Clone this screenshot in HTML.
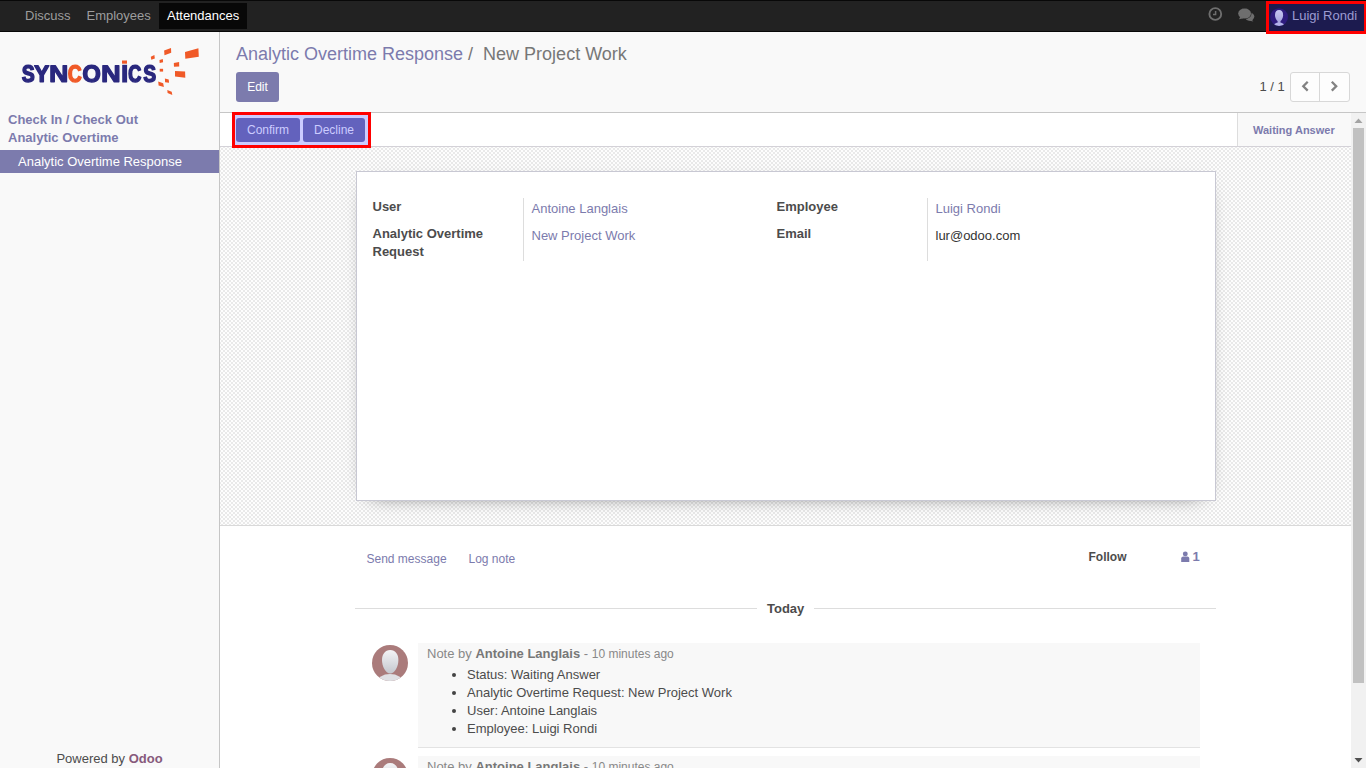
<!DOCTYPE html>
<html><head><meta charset="utf-8">
<style>
*{box-sizing:border-box;margin:0;padding:0}
html,body{width:1366px;height:768px;overflow:hidden;background:#fff;font-family:"Liberation Sans",sans-serif;font-size:13px;color:#4c4c4c}
.t{position:absolute;white-space:nowrap;line-height:20px}
#nav{position:absolute;left:0;top:0;width:1366px;height:32px;background:#222;border-top:1px solid #080808;border-bottom:1px solid #080808}
.nv{position:absolute;top:0;height:30px;line-height:30px;color:#9d9d9d;font-size:13px;white-space:nowrap}
#side{position:absolute;left:0;top:32px;width:220px;height:736px;background:#f9f9f9;border-right:1px solid #c6c6c6}
#cp{position:absolute;left:220px;top:32px;width:1146px;height:81px;background:#f9f9f9;border-bottom:1px solid #c6c6c6}
#content{position:absolute;left:220px;top:113px;width:1131px;height:655px;background:#fff;overflow:hidden}
#sbar{position:absolute;left:1351px;top:113px;width:15px;height:655px;background:#f1f1f1}
.b{font-weight:bold}
.p{color:#7c7bad}
.btn{position:absolute;border-radius:3px;text-align:center;white-space:nowrap}
</style></head><body>

<div id="nav">
  <div class="nv" style="left:25px">Discuss</div>
  <div class="nv" style="left:86.5px">Employees</div>
  <div style="position:absolute;left:159px;top:2px;width:88px;height:26px;background:#080808"></div>
  <div class="nv" style="left:167px;color:#fff">Attendances</div>
  <!-- clock -->
  <svg style="position:absolute;left:1205px;top:2px" width="22" height="22" viewBox="0 0 22 22">
    <circle cx="10.3" cy="11" r="5.9" fill="none" stroke="#6e6e6e" stroke-width="1.9"/>
    <path d="M10.6 8.1V11.4H8" fill="none" stroke="#6e6e6e" stroke-width="1.5"/>
  </svg>
  <!-- chat -->
  <svg style="position:absolute;left:1236px;top:0px" width="22" height="24" viewBox="0 0 22 24">
    <ellipse cx="13.6" cy="15.6" rx="4.7" ry="4.2" fill="#6e6e6e"/>
    <path d="M15.6 18.6L17.4 20.6L12.5 19.6z" fill="#6e6e6e"/>
    <ellipse cx="8.6" cy="12.6" rx="6.4" ry="5" fill="#6e6e6e" stroke="#222" stroke-width="1.1"/>
    <ellipse cx="8.6" cy="12.6" rx="6.4" ry="5" fill="#6e6e6e"/>
    <path d="M4.3 15.8L3 18.2L7.6 17.2z" fill="#6e6e6e"/>
  </svg>

</div>

<div id="side">
  <svg style="position:absolute;left:0;top:0" width="220" height="80" viewBox="0 32 220 80">
    <path transform="matrix(0.00937 0 0 -0.01159 21.847 81.868)" d="M1286 406Q1286 199 1132.5 89.5Q979 -20 682 -20Q411 -20 257.0 76.0Q103 172 59 367L344 414Q373 302 457.0 251.5Q541 201 690 201Q999 201 999 389Q999 449 963.5 488.0Q928 527 863.5 553.0Q799 579 616 616Q458 653 396.0 675.5Q334 698 284.0 728.5Q234 759 199.0 802.0Q164 845 144.5 903.0Q125 961 125 1036Q125 1227 268.5 1328.5Q412 1430 686 1430Q948 1430 1079.5 1348.0Q1211 1266 1249 1077L963 1038Q941 1129 873.5 1175.0Q806 1221 680 1221Q412 1221 412 1053Q412 998 440.5 963.0Q469 928 525.0 903.5Q581 879 752 842Q955 799 1042.5 762.5Q1130 726 1181.0 677.5Q1232 629 1259.0 561.5Q1286 494 1286 406Z" fill="#2a287e" stroke="#2a287e" stroke-width="1.4" vector-effect="non-scaling-stroke" stroke-linejoin="round"/>
<path transform="matrix(0.01102 0 0 -0.01150 34.214 81.800)" d="M831 578V0H537V578L35 1409H344L682 813L1024 1409H1333Z" fill="#2a287e" stroke="#2a287e" stroke-width="1.4" vector-effect="non-scaling-stroke" stroke-linejoin="round"/>
<path transform="matrix(0.01296 0 0 -0.01150 49.125 81.800)" d="M995 0 381 1085Q399 927 399 831V0H137V1409H474L1097 315Q1079 466 1079 590V1409H1341V0Z" fill="#2a287e" stroke="#2a287e" stroke-width="1.4" vector-effect="non-scaling-stroke" stroke-linejoin="round"/>
<path transform="matrix(0.00926 0 0 -0.01159 67.922 81.868)" d="M795 212Q1062 212 1166 480L1423 383Q1340 179 1179.5 79.5Q1019 -20 795 -20Q455 -20 269.5 172.5Q84 365 84 711Q84 1058 263.0 1244.0Q442 1430 782 1430Q1030 1430 1186.0 1330.5Q1342 1231 1405 1038L1145 967Q1112 1073 1015.5 1135.5Q919 1198 788 1198Q588 1198 484.5 1074.0Q381 950 381 711Q381 468 487.5 340.0Q594 212 795 212Z" fill="#f05a28" stroke="#f05a28" stroke-width="1.4" vector-effect="non-scaling-stroke" stroke-linejoin="round"/>
<path transform="matrix(0.01152 0 0 -0.01159 82.432 81.868)" d="M1507 711Q1507 491 1420.0 324.0Q1333 157 1171.0 68.5Q1009 -20 793 -20Q461 -20 272.5 175.5Q84 371 84 711Q84 1050 272.0 1240.0Q460 1430 795 1430Q1130 1430 1318.5 1238.0Q1507 1046 1507 711ZM1206 711Q1206 939 1098.0 1068.5Q990 1198 795 1198Q597 1198 489.0 1069.5Q381 941 381 711Q381 479 491.5 345.5Q602 212 793 212Q991 212 1098.5 342.0Q1206 472 1206 711Z" fill="#2a287e" stroke="#2a287e" stroke-width="1.4" vector-effect="non-scaling-stroke" stroke-linejoin="round"/>
<path transform="matrix(0.01321 0 0 -0.01150 101.091 81.800)" d="M995 0 381 1085Q399 927 399 831V0H137V1409H474L1097 315Q1079 466 1079 590V1409H1341V0Z" fill="#2a287e" stroke="#2a287e" stroke-width="1.4" vector-effect="non-scaling-stroke" stroke-linejoin="round"/>
<path transform="matrix(0.00881 0 0 -0.01159 128.260 81.868)" d="M795 212Q1062 212 1166 480L1423 383Q1340 179 1179.5 79.5Q1019 -20 795 -20Q455 -20 269.5 172.5Q84 365 84 711Q84 1058 263.0 1244.0Q442 1430 782 1430Q1030 1430 1186.0 1330.5Q1342 1231 1405 1038L1145 967Q1112 1073 1015.5 1135.5Q919 1198 788 1198Q588 1198 484.5 1074.0Q381 950 381 711Q381 468 487.5 340.0Q594 212 795 212Z" fill="#2a287e" stroke="#2a287e" stroke-width="1.4" vector-effect="non-scaling-stroke" stroke-linejoin="round"/>
<path transform="matrix(0.00929 0 0 -0.01159 143.352 81.868)" d="M1286 406Q1286 199 1132.5 89.5Q979 -20 682 -20Q411 -20 257.0 76.0Q103 172 59 367L344 414Q373 302 457.0 251.5Q541 201 690 201Q999 201 999 389Q999 449 963.5 488.0Q928 527 863.5 553.0Q799 579 616 616Q458 653 396.0 675.5Q334 698 284.0 728.5Q234 759 199.0 802.0Q164 845 144.5 903.0Q125 961 125 1036Q125 1227 268.5 1328.5Q412 1430 686 1430Q948 1430 1079.5 1348.0Q1211 1266 1249 1077L963 1038Q941 1129 873.5 1175.0Q806 1221 680 1221Q412 1221 412 1053Q412 998 440.5 963.0Q469 928 525.0 903.5Q581 879 752 842Q955 799 1042.5 762.5Q1130 726 1181.0 677.5Q1232 629 1259.0 561.5Q1286 494 1286 406Z" fill="#2a287e" stroke="#2a287e" stroke-width="1.4" vector-effect="non-scaling-stroke" stroke-linejoin="round"/>
    <rect x="122.2" y="64.8" width="4.9" height="17.7" fill="#2a287e"/>
    <g fill="#f05a28">
      <rect x="122" y="60.5" width="5" height="3.2"/>
      <path d="M150.8 56.7L154.4 55L154.8 58.4L151.3 59.8z"/>
      <path d="M164.1 50.4L171 47.9L171.2 52.8L164.5 55.3z"/>
      <path d="M185 52.1L198.4 48.3L198.8 56.7L185.3 58.8z"/>
      <path d="M159.5 60.1L162.8 59.1L163.1 62.2L159.7 62.9z"/>
      <path d="M173.8 62.9L179.1 62L179.2 66.4L174 66.8z"/>
      <path d="M159.7 68.8L163.1 68.8L163.1 71.6L159.7 71.6z"/>
      <path d="M175 71L185.1 71.5L185.3 77.8L175 76.5z"/>
      <path d="M164.9 78.6L168.7 79.5L169.1 82.8L165.1 82.2z"/>
      <path d="M158.2 81.6L163.2 83.3L163.9 87L158.6 85.4z"/>
      <path d="M167.3 90L171.7 91.7L172.3 94.9L167.6 92.9z"/>
    </g>
  </svg>
  <div class="t b p" style="left:8px;top:78px">Check In / Check Out</div>
  <div class="t b p" style="left:8px;top:96px">Analytic Overtime</div>
  <div style="position:absolute;left:0;top:118px;width:219px;height:23px;background:#7c7bad"></div>
  <div class="t" style="left:18px;top:120px;color:#fff">Analytic Overtime Response</div>
  <div class="t" style="left:56.4px;top:717px;color:#4c4c4c">Powered by <span class="b" style="color:#875a7b">Odoo</span></div>
</div>

<div id="cp">
  <div class="t" style="left:16px;top:9px;font-size:18px;line-height:26px"><span class="p">Analytic Overtime Response</span><span style="color:#777"> /&nbsp; New Project Work</span></div>
  <div class="btn" style="left:16px;top:40px;width:43px;height:30px;line-height:30px;background:#7c7bad;color:#fff;font-size:12px">Edit</div>
  <div class="t" style="left:1039.5px;top:45px;color:#4c4c4c">1 / 1</div>
  <div style="position:absolute;left:1070px;top:40px;width:60px;height:30px;background:#fdfdfd;border:1px solid #d8d8d8;border-radius:3px"></div>
  <div style="position:absolute;left:1099px;top:40px;width:1px;height:30px;background:#d8d8d8"></div>
  <svg style="position:absolute;left:1078px;top:47px" width="16" height="16" viewBox="0 0 16 16"><path d="M9.7 2.8L5.3 7.2L9.7 11.6" fill="none" stroke="#828282" stroke-width="2.3"/></svg>
  <svg style="position:absolute;left:1106px;top:47px" width="16" height="16" viewBox="0 0 16 16"><path d="M5.8 2.8L10.2 7.2L5.8 11.6" fill="none" stroke="#828282" stroke-width="2.3"/></svg>
</div>

<div id="content">
  <!-- statusbar -->
  <div style="position:absolute;left:0;top:0;width:1131px;height:34px;background:#fff;border-bottom:1px solid #d4d2d8"></div>
  <div style="position:absolute;left:1017px;top:0;width:114px;height:33px;background:#f9f9f9;border-left:1px solid #ddd"></div>
  <div class="t b p" style="left:1033px;top:7px;font-size:11px">Waiting Answer</div>


  <!-- sheet bg -->
  <div style="position:absolute;left:0;top:34px;width:1131px;height:379px;border-bottom:1px solid #d9d9d9;background-color:#f4f4f4;background-image:conic-gradient(#e9e9e9 0 25%,#fdfdfd 0 50%,#e9e9e9 0 75%,#fdfdfd 0);background-size:4px 4px;background-position:-1px 1px"></div>
  <div style="position:absolute;left:136px;top:58px;width:860px;height:330px;background:#fff;border:1px solid #c8c8d3;box-shadow:0 5px 20px -15px #000"></div>

  <div class="t b" style="left:152.5px;top:84px">User</div>
  <div class="t b" style="left:152.5px;top:112px;line-height:18px">Analytic Overtime<br>Request</div>
  <div style="position:absolute;left:303px;top:85px;width:1px;height:63px;background:#ddd"></div>
  <div class="t p" style="left:311.5px;top:86px">Antoine Langlais</div>
  <div class="t p" style="left:311.5px;top:113px">New Project Work</div>

  <div class="t b" style="left:556.5px;top:84px">Employee</div>
  <div class="t b" style="left:556.5px;top:111px">Email</div>
  <div style="position:absolute;left:707px;top:85px;width:1px;height:63px;background:#ddd"></div>
  <div class="t p" style="left:715.5px;top:86px">Luigi Rondi</div>
  <div class="t" style="left:715.5px;top:113px;color:#333">lur@odoo.com</div>

  <!-- chatter -->
  <div class="t p" style="left:146.5px;top:436px;font-size:12px">Send message</div>
  <div class="t p" style="left:248.5px;top:436px;font-size:12px">Log note</div>
  <div class="t b" style="left:868.5px;top:434px;color:#4c4c4c;font-size:12px">Follow</div>
  <svg style="position:absolute;left:960px;top:437px" width="11" height="12" viewBox="0 0 11 12"><circle cx="5.3" cy="3.9" r="2.45" fill="#7c7bad"/><path d="M1.2 11.9V8.6C1.2 7.2 2.2 6.5 3.3 6.5H7.3C8.4 6.5 9.3 7.2 9.3 8.6V11.9z" fill="#7c7bad"/></svg>
  <div class="t b p" style="left:972.5px;top:434px">1</div>

  <div style="position:absolute;left:135px;top:495px;width:402px;height:1px;background:#ddd"></div>
  <div style="position:absolute;left:594px;top:495px;width:402px;height:1px;background:#ddd"></div>
  <div class="t b" style="left:547px;top:486px;color:#4c4c4c">Today</div>

  <!-- message 1 -->
  <div style="position:absolute;left:198px;top:530px;width:782px;height:105px;background:#f8f8f8;border-bottom:1px solid #e3e3e3"></div>
  <svg style="position:absolute;left:152px;top:532px" width="36" height="36" viewBox="0 0 36 36">
    <defs><clipPath id="cc"><circle cx="18" cy="18" r="18"/></clipPath>
    <linearGradient id="hg" x1="0" y1="0" x2="0" y2="1"><stop offset="0" stop-color="#f4f4f6"/><stop offset="1" stop-color="#c4c7ce"/></linearGradient></defs>
    <circle cx="18" cy="18" r="18" fill="#aa7b7b"/>
    <g clip-path="url(#cc)">
      <ellipse cx="18" cy="37.5" rx="13" ry="8.5" fill="#dfe0e4"/>
      <path d="M18.2 5C23.5 5 26.4 9.5 26.4 15C26.4 21 23 28.5 18.2 28.5C13.4 28.5 10 21 10 15C10 9.5 12.9 5 18.2 5z" fill="url(#hg)"/>
    </g>
  </svg>
  <div class="t" style="left:207px;top:531px;color:#888">Note by <span class="b" style="color:#777">Antoine Langlais</span> - <span style="font-size:12px">10 minutes ago</span></div>
  <div style="position:absolute;left:232px;top:560px;width:4px;height:4px;border-radius:50%;background:#444"></div>
  <div class="t" style="left:247px;top:553px;color:#4c4c4c;line-height:18px">Status: Waiting Answer<br>Analytic Overtime Request: New Project Work<br>User: Antoine Langlais<br>Employee: Luigi Rondi</div>
  <div style="position:absolute;left:232px;top:578px;width:4px;height:4px;border-radius:50%;background:#444"></div>
  <div style="position:absolute;left:232px;top:596px;width:4px;height:4px;border-radius:50%;background:#444"></div>
  <div style="position:absolute;left:232px;top:614px;width:4px;height:4px;border-radius:50%;background:#444"></div>

  <!-- message 2 -->
  <div style="position:absolute;left:198px;top:643px;width:782px;height:105px;background:#f8f8f8"></div>
  <svg style="position:absolute;left:152px;top:645px" width="36" height="36" viewBox="0 0 36 36">
    <circle cx="18" cy="18" r="18" fill="#aa7b7b"/>
    <g clip-path="url(#cc)">
      <path d="M18.2 5C23.5 5 26.4 9.5 26.4 15C26.4 21 23 28.5 18.2 28.5C13.4 28.5 10 21 10 15C10 9.5 12.9 5 18.2 5z" fill="url(#hg)"/>
    </g>
  </svg>
  <div class="t" style="left:207px;top:644px;color:#888">Note by <span class="b" style="color:#777">Antoine Langlais</span> - <span style="font-size:12px">10 minutes ago</span></div>
</div>

<div id="sbar">
  <svg style="position:absolute;left:0;top:0" width="15" height="15" viewBox="0 0 15 15"><path d="M3.5 10L7.5 5.5L11.5 10z" fill="#a3a3a3"/></svg>
  <div style="position:absolute;left:2px;top:15px;width:11px;height:555px;background:#c1c1c1"></div>
  <svg style="position:absolute;left:0;top:640px" width="15" height="15" viewBox="0 0 15 15"><path d="M3.5 5L7.5 9.5L11.5 5z" fill="#505050"/></svg>
</div>


<!-- highlighted overlays -->
<div style="position:absolute;left:1266px;top:1px;width:101px;height:33px;border:3px solid #f00;background:#1c1b4f"></div>
<svg style="position:absolute;left:1269px;top:7px" width="20" height="20" viewBox="0 0 20 20">
  <defs><clipPath id="ac"><circle cx="10.1" cy="10.05" r="8.9"/></clipPath>
  <linearGradient id="ag" x1="0" y1="0" x2="0" y2="1"><stop offset="0" stop-color="#c6c6f2"/><stop offset="1" stop-color="#a8a8e0"/></linearGradient></defs>
  <circle cx="10.1" cy="10.05" r="8.9" fill="#2e1c7e"/>
  <g clip-path="url(#ac)">
    <ellipse cx="10.05" cy="19.6" rx="6" ry="4.1" fill="#b2b2ea"/>
    <path d="M10.05 3.1C12.6 3.1 14.1 5 14.1 8C14.1 11 12.5 14.4 10.05 14.4C7.6 14.4 6 11 6 8C6 5 7.5 3.1 10.05 3.1z" fill="url(#ag)"/>
    <rect x="8.6" y="13" width="2.9" height="3" fill="#a8a8e0"/>
  </g>
</svg>
<div class="nv" style="left:1292px;top:1px;color:#9c9cd2">Luigi Rondi</div>
<div style="position:absolute;left:232px;top:112px;width:139px;height:36px;border:3px solid #f00;background:#ccccff"></div>
<div class="btn" style="left:236px;top:118px;width:64px;height:24px;line-height:24px;background:#6362bd;color:#ccccff;font-size:12px">Confirm</div>
<div class="btn" style="left:303px;top:118px;width:62px;height:24px;line-height:24px;background:#6362bd;color:#ccccff;font-size:12px">Decline</div>
</body></html>
